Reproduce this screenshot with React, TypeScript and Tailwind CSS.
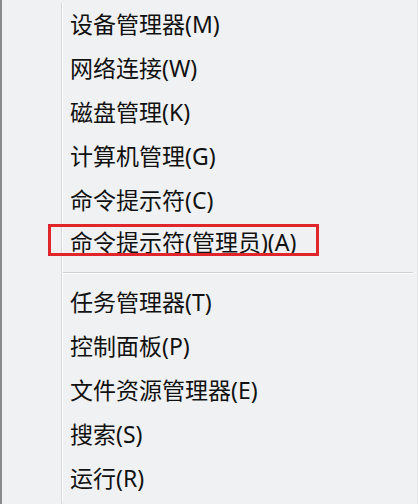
import React from 'react';

const top = ['设备管理器(M)', '网络连接(W)', '磁盘管理(K)', '计算机管理(G)', '命令提示符(C)'];
const bottom = ['任务管理器(T)', '控制面板(P)', '文件资源管理器(E)', '搜索(S)', '运行(R)'];

function Item({ label, marked }: { label: string; marked?: boolean }) {
  return (
    <div className="relative flex h-[44px] items-center">
      <div className="w-[59px] shrink-0 self-stretch" />
      <div className="w-px shrink-0 self-stretch bg-[#d6d8da]" />
      <div className="w-px shrink-0 self-stretch bg-white" />
      <span className={`pl-[7px] text-[23px] leading-none text-[#111] ${marked ? '-mt-[5px]' : '-mt-[2px]'}`}>
        {label}
      </span>
      {marked && (
        <div className="pointer-events-none absolute left-[46px] top-[1px] h-[32px] w-[271px] border-[3px] border-[#e0252b]" />
      )}
    </div>
  );
}

export default function App() {
  return (
    <div
      className="h-[504px] w-[418px] overflow-hidden bg-[#f0f1f2]"
      style={{ fontFamily: '"Noto Sans", "Noto Sans CJK SC", sans-serif' }}
    >
      <div className="flex h-full border-l-2 border-r border-l-[#8a8a8a] border-r-[#e2e4e6]">
        <div className="flex flex-1 flex-col pt-[3px]">
          {top.map((t) => (
            <Item key={t} label={t} />
          ))}
          <Item label="命令提示符(管理员)(A)" marked />
          <div className="flex h-[14px]">
            <div className="w-[59px] shrink-0" />
            <div className="w-px shrink-0 bg-[#d6d8da]" />
            <div className="w-px shrink-0 bg-white" />
            <div className="flex flex-1 flex-col pt-[5px] pr-[4px]">
              <div className="h-px bg-[#cfd1d3]" />
              <div className="h-px bg-white" />
            </div>
          </div>
          {bottom.map((t) => (
            <Item key={t} label={t} />
          ))}
          <div className="flex flex-1">
            <div className="w-[59px] shrink-0" />
            <div className="w-px shrink-0 bg-[#d6d8da]" />
          </div>
        </div>
      </div>
    </div>
  );
}
